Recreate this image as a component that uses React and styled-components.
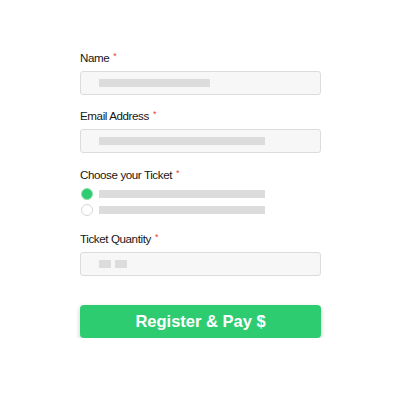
import React from "react";
import styled, { createGlobalStyle } from "styled-components";

const Global = createGlobalStyle`
  html, body { margin: 0; padding: 0; background: #fff; }
  body { font-family: "Liberation Sans", Arial, sans-serif; }
`;

const Form = styled.div`
  width: 241px;
  padding: 49px 0 0 80px;
  display: flex;
  flex-direction: column;
`;

const Field = styled.div`
  display: flex;
  flex-direction: column;
  margin-bottom: ${(p) => p.$mb || 0}px;
`;

const Label = styled.div`
  font-size: 11.6px;
  line-height: 15px;
  height: 15px;
  color: #161616;
  margin-bottom: 7px;
  letter-spacing: -0.4px;
`;

const Req = styled.span`
  color: #e8412f;
  font-size: 9px;
  vertical-align: 3px;
  margin-left: 4px;
`;

const Input = styled.div`
  box-sizing: border-box;
  height: 24px;
  border: 1px solid #dcdcdc;
  border-radius: 3px;
  background: #f7f7f7;
  display: flex;
  align-items: center;
  gap: 4px;
  padding-left: 18px;
`;

const Bar = styled.div`
  height: 8px;
  width: ${(p) => p.$w}px;
  background: #dcdcdc;
`;

const Options = styled.div`
  display: flex;
  flex-direction: column;
  gap: 4px;
`;

const Option = styled.div`
  display: flex;
  align-items: center;
  gap: 6px;
  height: 12px;
  padding-left: 1px;
`;

const Radio = styled.div`
  box-sizing: border-box;
  width: 12px;
  height: 12px;
  border-radius: 50%;
  border: 1px solid ${(p) => (p.$on ? "#8fe0ad" : "#d6d6d6")};
  background: ${(p) => (p.$on ? "#2ecc71" : "#fff")};
  flex: none;
`;

const Button = styled.button`
  margin-top: 29px;
  height: 33px;
  width: 241px;
  border: none;
  border-radius: 4px;
  background: #2ecc71;
  color: #fff;
  font-family: "Liberation Sans", Arial, sans-serif;
  font-weight: bold;
  font-size: 16.5px;
  box-shadow: 0 2px 5px rgba(0, 0, 0, 0.22);
  padding: 0;
  cursor: pointer;
`;

export default function App() {
  return (
    <>
      <Global />
      <Form>
        <Field $mb={12}>
          <Label>Name<Req>*</Req></Label>
          <Input><Bar $w={111} /></Input>
        </Field>
        <Field $mb={13}>
          <Label>Email Address<Req>*</Req></Label>
          <Input><Bar $w={166} /></Input>
        </Field>
        <Field $mb={14}>
          <Label>Choose your Ticket<Req>*</Req></Label>
          <Options>
            <Option><Radio $on /><Bar $w={166} /></Option>
            <Option><Radio /><Bar $w={166} /></Option>
          </Options>
        </Field>
        <Field>
          <Label>Ticket Quantity<Req>*</Req></Label>
          <Input><Bar $w={12} /><Bar $w={12} /></Input>
        </Field>
        <Button>Register &amp; Pay $</Button>
      </Form>
    </>
  );
}
